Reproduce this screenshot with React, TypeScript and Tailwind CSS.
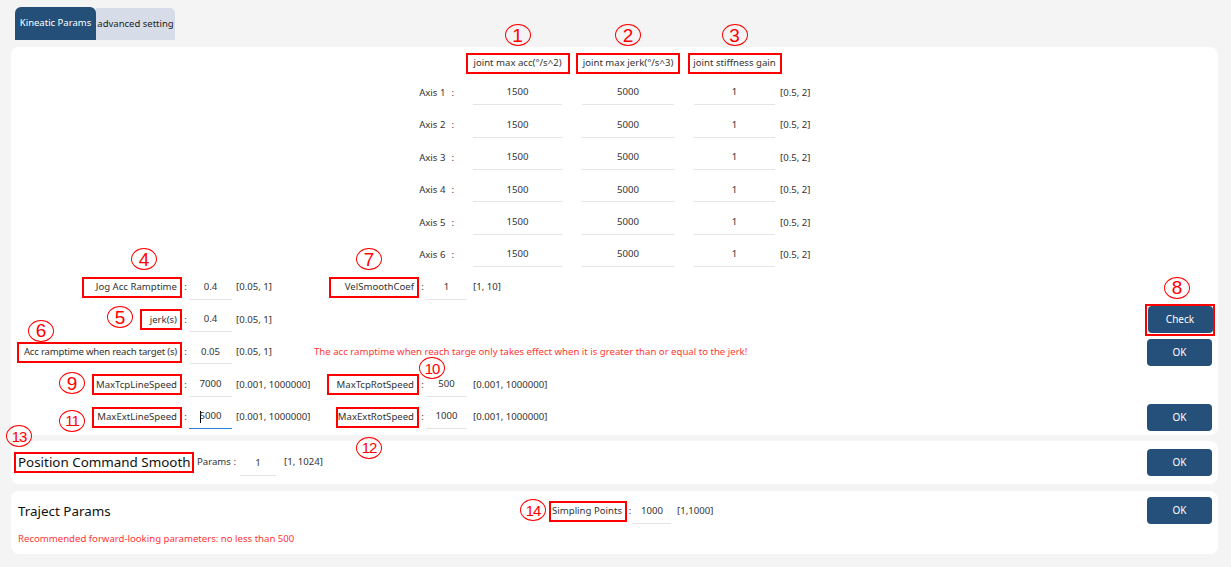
import React from 'react';

const rowH = 'flex h-[32.4px] items-center';

function Badge({ n, pos }: { n: number; pos: string }) {
  const two = n > 9;
  return (
    <span
      className={`absolute z-10 flex h-[22px] w-[26px] items-center justify-center rounded-[50%] border-[1.5px] border-[#ff0000] font-['Liberation_Sans',Arial,sans-serif] leading-none text-[#ff0000] ${
        two ? 'text-[15px] tracking-[-1px]' : 'text-[19px]'
      } ${pos}`}
    >
      {n}
    </span>
  );
}

function Boxed({
  label,
  w,
  badge,
  pos,
  align = 'right',
  size = 'text-[9.6px]',
}: {
  label: string;
  w: string;
  badge?: number;
  pos?: string;
  align?: 'left' | 'right' | 'center';
  size?: string;
}) {
  const alignCls =
    align === 'right' ? 'justify-end pr-[3px]' : align === 'center' ? 'justify-center' : 'justify-start pl-[2px]';
  return (
    <div
      className={`relative flex h-[21px] shrink-0 items-center whitespace-nowrap border-2 border-[#ff0000] ${alignCls} ${w} ${size}`}
    >
      {label}
      {badge !== undefined && pos && <Badge n={badge} pos={pos} />}
    </div>
  );
}

function Field({ value, w, focused = false }: { value: string; w: string; focused?: boolean }) {
  return (
    <div
      className={`flex h-[24px] shrink-0 items-center justify-center ${w} ${
        focused ? 'border-b-[1.5px] border-[#2f7fd6]' : 'border-b border-[#e4e4e4]'
      }`}
    >
      {focused && <span className="inline-block h-[12px] w-px bg-black" />}
      <span className={focused ? 'ml-[-1px]' : ''}>{value}</span>
    </div>
  );
}

function Btn({ label }: { label: string }) {
  return (
    <button className="flex h-[27px] w-[65px] shrink-0 items-center justify-center rounded-[4px] bg-[#245079] text-[10px] text-white">
      {label}
    </button>
  );
}

const axes = [1, 2, 3, 4, 5, 6];

export default function App() {
  return (
    <div className="h-[567px] w-[1231px] overflow-hidden bg-[#f4f4f4] pl-[11px] pr-[13px] font-['Noto_Sans',Arial,sans-serif] text-[9.6px] text-[#333]">
      {/* tabs */}
      <div className="flex h-[40px] items-end pl-[4px]">
        <div className="flex h-[33px] w-[81px] items-center justify-center whitespace-nowrap rounded-t-[6px] bg-[#234f78] text-[9.5px] text-white">
          Kineatic Params
        </div>
        <div className="flex h-[32px] w-[79px] items-center justify-center whitespace-nowrap rounded-tr-[5px] bg-[#d6dde8] text-[9.5px] text-[#222]">
          advanced setting
        </div>
      </div>

      {/* kinematic card */}
      <div className="mt-[7px] h-[388px] rounded-[8px] bg-white pr-[6px] pt-[6px]">
        <div className="flex h-[20px]">
          <div className="w-[446px] shrink-0" />
          <div className="ml-[16px] flex w-[89px] justify-center">
            <Boxed label="joint max acc(°/s^2)" w="w-[104px]" align="center" badge={1} pos="left-1/2 -translate-x-1/2 top-[-31px]" />
          </div>
          <div className="ml-[20px] flex w-[92px] justify-center">
            <Boxed label="joint max jerk(°/s^3)" w="w-[104px]" align="center" badge={2} pos="left-1/2 -translate-x-1/2 top-[-31px]" />
          </div>
          <div className="ml-[20px] flex w-[81px] justify-center">
            <Boxed label="joint stiffness gain" w="w-[94px]" align="center" badge={3} pos="left-1/2 -translate-x-1/2 top-[-31px]" />
          </div>
        </div>

        <div className="mt-[4px]">
          {axes.map((a) => (
            <div key={a} className={rowH}>
              <div className="w-[446px] shrink-0 pr-[3px] text-right">
                Axis {a}
                <span className="ml-[6px]">:</span>
              </div>
              <Field value="1500" w="ml-[16px] w-[89px]" />
              <Field value="5000" w="ml-[20px] w-[92px]" />
              <Field value="1" w="ml-[20px] w-[81px]" />
              <span className="ml-[5px]">[0.5, 2]</span>
            </div>
          ))}

          {/* Jog acc ramptime */}
          <div className={rowH}>
            <div className="flex w-[171px] shrink-0 justify-end">
              <Boxed label="Jog Acc Ramptime" w="w-[100px]" badge={4} pos="left-[47px] top-[-31px]" />
            </div>
            <span className="w-[7px] shrink-0 text-center">:</span>
            <Field value="0.4" w="w-[43px]" />
            <span className="ml-[4px] w-[64px] shrink-0 whitespace-nowrap">[0.05, 1]</span>
            <div className="flex w-[119px] shrink-0 justify-end">
              <Boxed label="VelSmoothCoef" w="w-[90px]" badge={7} pos="left-[25px] top-[-31px]" />
            </div>
            <span className="w-[7px] shrink-0 text-center">:</span>
            <Field value="1" w="w-[41px]" />
            <span className="ml-[6px]">[1, 10]</span>
          </div>

          {/* jerk */}
          <div className={rowH}>
            <div className="flex w-[171px] shrink-0 justify-end">
              <Boxed label="jerk(s)" w="w-[42px]" badge={5} pos="left-[-35px] top-[-5px]" />
            </div>
            <span className="w-[7px] shrink-0 text-center">:</span>
            <Field value="0.4" w="w-[43px]" />
            <span className="ml-[4px] w-[64px] shrink-0 whitespace-nowrap">[0.05, 1]</span>
            <div className="relative ml-auto mr-[-3px] flex h-[32px] w-[70px] items-center justify-center border-2 border-[#ff0000]">
              <Btn label="Check" />
              <Badge n={8} pos="left-[17px] top-[-29px]" />
            </div>
          </div>

          {/* acc ramptime */}
          <div className={rowH}>
            <div className="flex w-[171px] shrink-0 justify-end">
              <Boxed
                label="Acc ramptime when reach target (s)"
                w="w-[165px] pr-[1px] tracking-[-0.2px]"
                badge={6}
                pos="left-[9px] top-[-24px]"
              />
            </div>
            <span className="w-[7px] shrink-0 text-center">:</span>
            <Field value="0.05" w="w-[43px]" />
            <span className="ml-[4px] w-[64px] shrink-0 whitespace-nowrap">[0.05, 1]</span>
            <span className="ml-[14px] whitespace-nowrap text-[#ff3535]">
              The acc ramptime when reach targe only takes effect when it is greater than or equal to the jerk!
            </span>
            <div className="ml-auto">
              <Btn label="OK" />
            </div>
          </div>

          {/* tcp speed */}
          <div className={rowH}>
            <div className="flex w-[171px] shrink-0 justify-end">
              <Boxed label="MaxTcpLineSpeed" w="w-[90px]" badge={9} pos="left-[-35px] top-[-4px]" />
            </div>
            <span className="w-[7px] shrink-0 text-center">:</span>
            <Field value="7000" w="w-[43px]" />
            <span className="ml-[4px] w-[64px] shrink-0 whitespace-nowrap">[0.001, 1000000]</span>
            <div className="flex w-[119px] shrink-0 justify-end">
              <Boxed label="MaxTcpRotSpeed" w="w-[92px]" badge={10} pos="left-[90px] top-[-19px]" />
            </div>
            <span className="w-[7px] shrink-0 text-center">:</span>
            <Field value="500" w="w-[41px]" />
            <span className="ml-[6px]">[0.001, 1000000]</span>
          </div>

          {/* ext speed */}
          <div className={rowH}>
            <div className="flex w-[171px] shrink-0 justify-end">
              <Boxed label="MaxExtLineSpeed" w="w-[90px]" badge={11} pos="left-[-35px] top-[1px]" />
            </div>
            <span className="w-[7px] shrink-0 text-center">:</span>
            <Field value="5000" w="w-[43px]" focused />
            <span className="ml-[4px] w-[64px] shrink-0 whitespace-nowrap">[0.001, 1000000]</span>
            <div className="flex w-[119px] shrink-0 justify-end">
              <Boxed label="MaxExtRotSpeed" w="w-[83px]" badge={12} pos="left-[18px] top-[28px]" />
            </div>
            <span className="w-[7px] shrink-0 text-center">:</span>
            <Field value="1000" w="w-[41px]" />
            <span className="ml-[6px]">[0.001, 1000000]</span>
            <div className="ml-auto">
              <Btn label="OK" />
            </div>
          </div>
        </div>
      </div>

      {/* position command smooth */}
      <div className="mt-[6px] flex h-[43px] items-center rounded-[8px] bg-white pl-[3px] pr-[6px]">
        <Boxed
          label="Position Command Smooth"
          w="w-[180px]"
          align="left"
          size="text-[13.4px] text-[#111]"
          badge={13}
          pos="left-[-10px] top-[-29px]"
        />
        <span className="ml-[3px] w-[43px] shrink-0 whitespace-nowrap">Params :</span>
        <Field value="1" w="w-[36px] mt-[3px]" />
        <span className="ml-[8px]">[1, 1024]</span>
        <div className="ml-auto">
          <Btn label="OK" />
        </div>
      </div>

      {/* traject params */}
      <div className="mt-[7px] flex h-[63px] items-start rounded-[8px] bg-white pr-[6px]">
        <div className="w-[538px] shrink-0 pl-[7px]">
          <div className="mt-[10px] text-[13.4px] leading-[20px] text-[#111]">Traject Params</div>
          <div className="mt-[12px] leading-[12px] text-[#ff3535]">
            Recommended forward-looking parameters: no less than 500
          </div>
        </div>
        <div className="mt-[10px] flex h-[21px] items-center">
          <Boxed label="Simpling Points" w="w-[78px] pr-[2px]" badge={14} pos="left-[-31px] top-[-4px]" />
          <span className="w-[6px] shrink-0 text-center">:</span>
          <Field value="1000" w="w-[38px] h-[22px]" />
          <span className="ml-[6px]">[1,1000]</span>
        </div>
        <div className="ml-auto mt-[6px]">
          <Btn label="OK" />
        </div>
      </div>
    </div>
  );
}
